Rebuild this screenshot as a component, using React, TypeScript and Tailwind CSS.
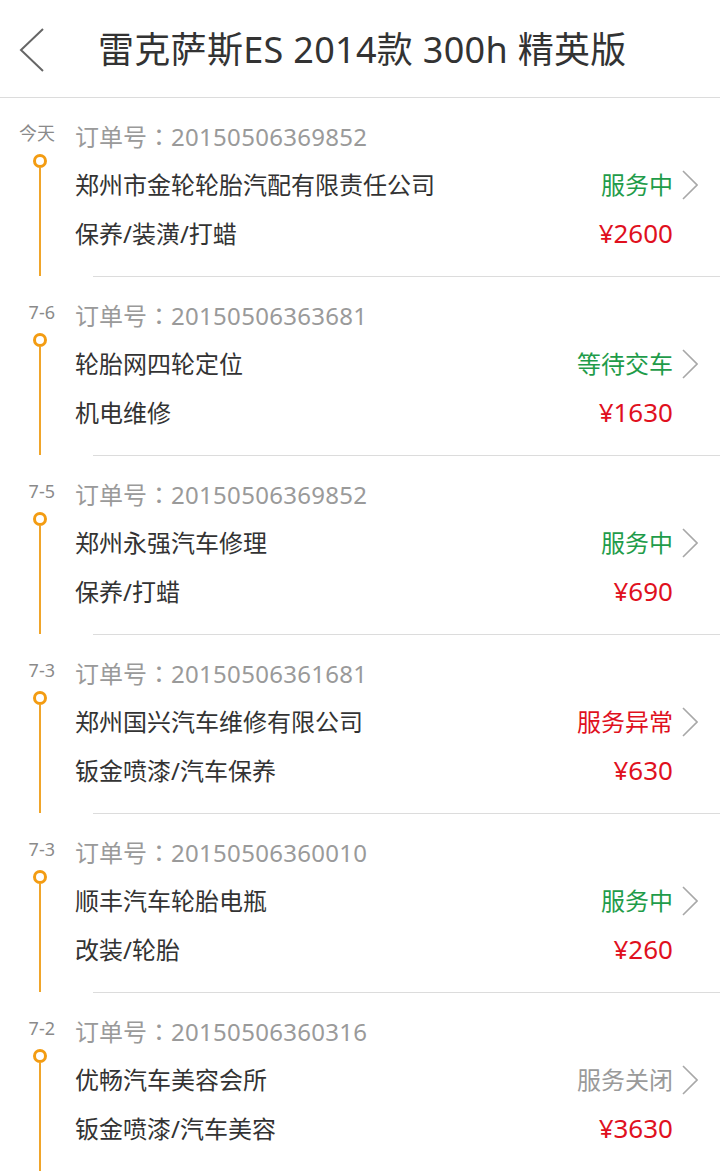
const font = "font-['Noto_Sans','Noto_Sans_CJK_SC',sans-serif]"

type Order = {
  date: string
  no: string
  shop: string
  service: string
  status: string
  tone: 'green' | 'red' | 'gray'
  price: string
}

const orders: Order[] = [
  { date: '今天', no: '20150506369852', shop: '郑州市金轮轮胎汽配有限责任公司', service: '保养/装潢/打蜡', status: '服务中', tone: 'green', price: '¥2600' },
  { date: '7-6', no: '20150506363681', shop: '轮胎网四轮定位', service: '机电维修', status: '等待交车', tone: 'green', price: '¥1630' },
  { date: '7-5', no: '20150506369852', shop: '郑州永强汽车修理', service: '保养/打蜡', status: '服务中', tone: 'green', price: '¥690' },
  { date: '7-3', no: '20150506361681', shop: '郑州国兴汽车维修有限公司', service: '钣金喷漆/汽车保养', status: '服务异常', tone: 'red', price: '¥630' },
  { date: '7-3', no: '20150506360010', shop: '顺丰汽车轮胎电瓶', service: '改装/轮胎', status: '服务中', tone: 'green', price: '¥260' },
  { date: '7-2', no: '20150506360316', shop: '优畅汽车美容会所', service: '钣金喷漆/汽车美容', status: '服务关闭', tone: 'gray', price: '¥3630' },
]

const toneClass = {
  green: 'text-[#1f9c4a]',
  red: 'text-[#e0101e]',
  gray: 'text-[#9a9a9a]',
}

function OrderItem({ o }: { o: Order }) {
  return (
    <div>
      <div className="flex h-[178px]">
        <div className="flex w-[75px] flex-col">
          <div className="h-[56px] pr-[20px] pt-[24px] text-right text-[18px] leading-[22px] text-[#8a8a8a]">{o.date}</div>
          <div className="ml-[33px] h-[14px] w-[14px] rounded-full border-[3px] border-[#f39c12] bg-white" />
          <div className="ml-[39px] w-[2px] flex-1 bg-[#f0a52a]" />
        </div>
        <div className="flex-1 pt-[13px]">
          <div className="h-[49px] text-[24px] leading-[49px] text-[#9a9a9a]">
            订单号<span className="font-['Noto_Sans_CJK_TC',sans-serif]">：</span>
            <span className="tracking-[0.3px]">{o.no}</span>
          </div>
          <div className="flex h-[49px] items-center">
            <div className="flex-1 text-[24px] leading-[49px] text-[#333]">{o.shop}</div>
            <div className={`text-[24px] leading-[49px] ${toneClass[o.tone]}`}>{o.status}</div>
            <svg className="ml-[9px] mr-[22px]" width="16" height="30" viewBox="0 0 16 30" fill="none">
              <path d="M1 1 L15 15 L1 29" stroke="#a8a8a8" strokeWidth="1.6" />
            </svg>
          </div>
          <div className="flex h-[49px] items-center">
            <div className="flex-1 text-[24px] leading-[49px] text-[#333]">{o.service}</div>
            <div className="mr-[47px] text-[26px] leading-[49px] text-[#e0101e]">{o.price}</div>
          </div>
        </div>
      </div>
      <div className="ml-[93px] h-px bg-[#dcdcdc]" />
    </div>
  )
}

export default function App() {
  return (
    <div className={`${font} min-h-screen w-[720px] bg-white`}>
      <div className="flex h-[98px] items-center border-b border-[#dcdcdc] pt-[3px]">
        <svg className="ml-[19px]" width="26" height="46" viewBox="0 0 26 46" fill="none">
          <path d="M24 2 L2 23 L24 44" stroke="#666" strokeWidth="2" />
        </svg>
        <h1 className="ml-[53px] text-[36px] font-normal leading-none tracking-[0.3px] text-[#333]">雷克萨斯ES 2014款 300h 精英版</h1>
      </div>
      {orders.map((o, i) => (
        <OrderItem key={i} o={o} />
      ))}
    </div>
  )
}
